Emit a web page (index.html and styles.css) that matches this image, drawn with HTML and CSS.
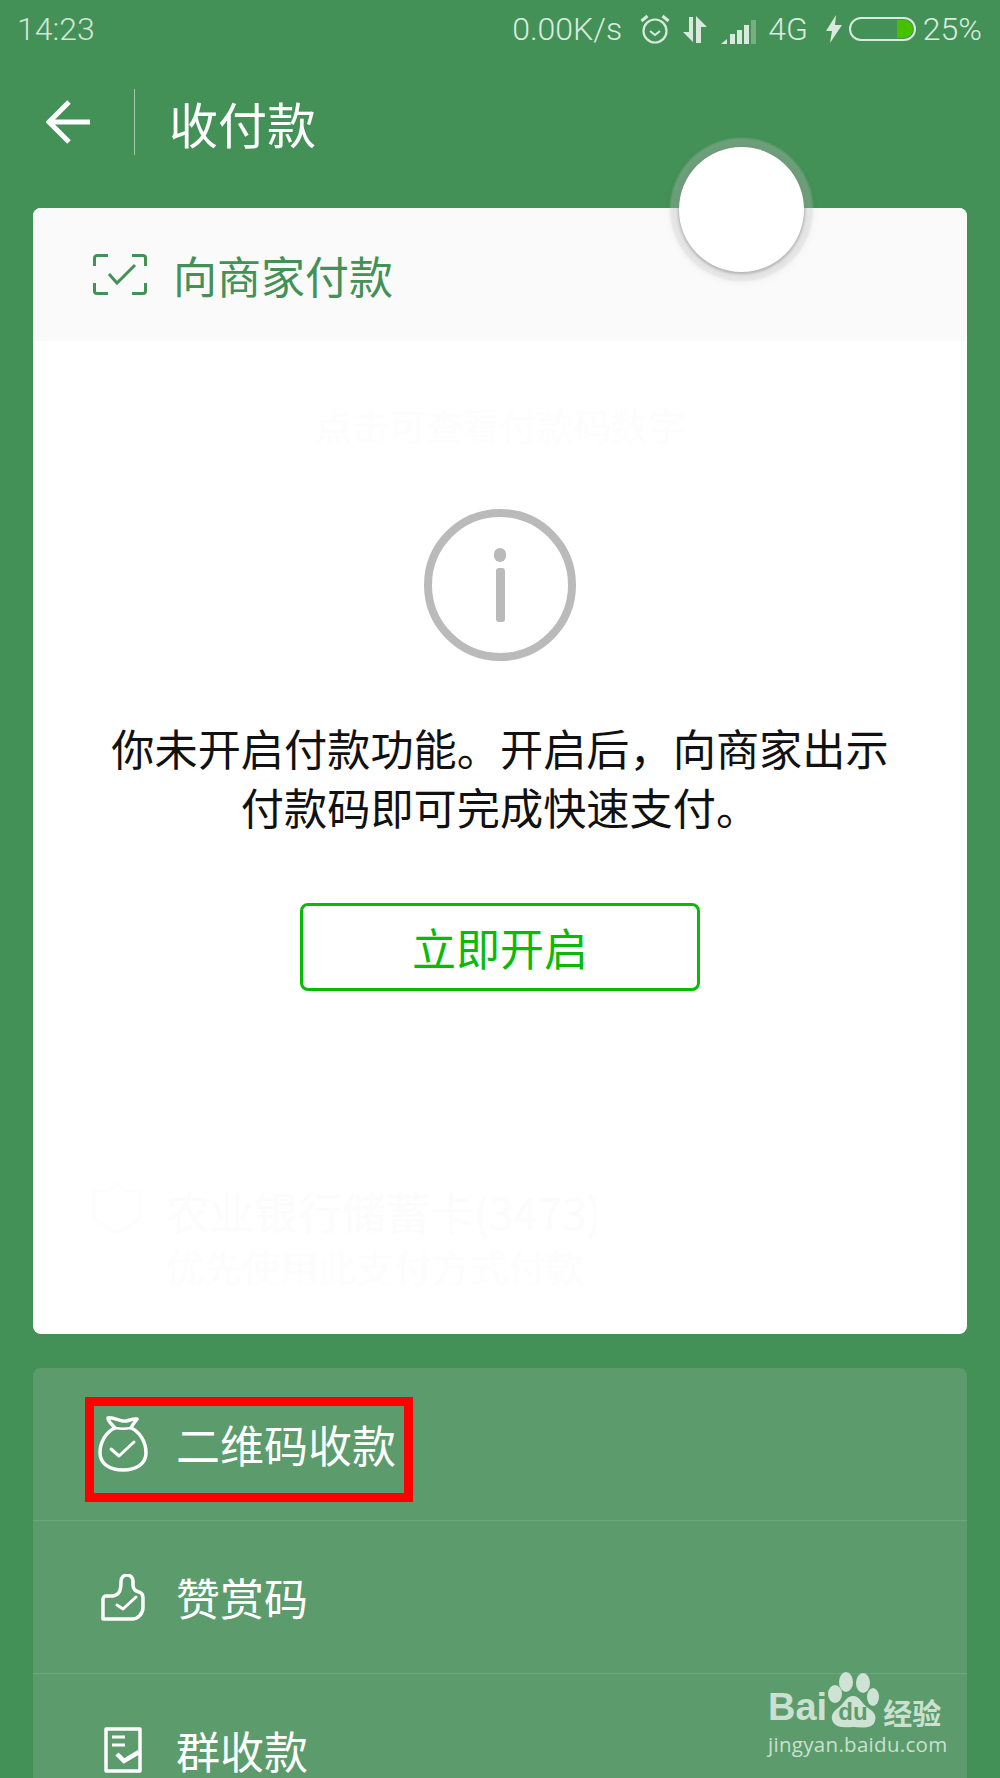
FILE: index.html
```html
<!DOCTYPE html>
<html>
<head>
    <title>收付款</title>
    <link rel="stylesheet" href="styles.css">
</head>
<body>
    <div class="page">
        <div class="status-bar">
            <span class="time">14:23</span>
            <div class="status-right">
                <span class="speed">0.00K/s</span>
                <svg class="st-alarm" width="30" height="30" viewBox="0 0 30 30" fill="none" stroke="#d9e9dd" stroke-width="2.2">
                    <circle cx="15" cy="17" r="11.5"/>
                    <path d="M10 17l5 4 5-4" stroke-width="2"/>
                    <path d="M1.500 7l6-5M28.500 7l-6-5" stroke-width="3"/>
                </svg>
                <svg class="st-arrows" width="26" height="27" viewBox="0 0 26 27" fill="#d9e9dd">
                    <path d="M7 1h4v25L1 16h6z"/>
                    <path d="M14 27V0l11 11h-6v16z"/>
                </svg>
                <svg class="st-signal" width="35" height="24" viewBox="0 0 35 24" fill="#d9e9dd">
                    <path d="M0 24l6-5v5z"/>
                    <rect x="9" y="14" width="5" height="10"/>
                    <rect x="16" y="10" width="5" height="14"/>
                    <rect x="23" y="5" width="5" height="19"/>
                    <rect x="30" y="0" width="5" height="24" opacity="0.35"/>
                </svg>
                <span class="net">4G</span>
                <svg class="st-bolt" width="16" height="28" viewBox="0 0 16 28" fill="#d9e9dd">
                    <path d="M10 0L0 16h6L4 28 16 10H9z"/>
                </svg>
                <div class="battery"><div class="battery-level"></div></div>
                <span class="percent">25%</span>
            </div>
        </div>

        <div class="top-bar">
            <svg class="back" width="44" height="44" viewBox="0 0 44 44" fill="none" stroke="#fff" stroke-width="5">
                <path d="M44 22H4M23 2L3 22l20 20"/>
            </svg>
            <div class="top-divider"></div>
            <div class="top-title">收付款</div>
        </div>

        <div class="card">
            <div class="card-head">
                <svg class="scan-icon" width="54" height="41" viewBox="0 0 54 41" fill="none" stroke="#439157" stroke-width="3">
                    <path d="M15 1.500H4a2.500 2.500 0 0 0-2.500 2.500V12M39 1.500h11a2.500 2.500 0 0 1 2.500 2.500V12M15 39.500H4a2.500 2.500 0 0 1-2.500-2.500V29M39 39.500h11a2.500 2.500 0 0 0 2.500-2.500V29"/>
                    <path d="M16 20l8 9 18-18"/>
                </svg>
                <span class="card-title">向商家付款</span>
            </div>
            <div class="card-body">
                <div class="hint-faint">点击可查看付款码数字</div>
                <div class="info-ring"><div class="info-dot"></div><div class="info-bar"></div></div>
                <div class="message">你未开启付款功能。开启后，向商家出示<br>付款码即可完成快速支付。</div>
                <div class="open-btn">立即开启</div>
                <div class="bank">
                    <svg class="bank-icon" width="50" height="53" viewBox="0 0 50 53" fill="none" stroke="#fdfdfd" stroke-width="3">
                        <path d="M2 10h14l9-8 9 8h14v28L25 52 2 38z"/>
                    </svg>
                    <div class="bank-text">
                        <div class="bank-name">农业银行储蓄卡(3473)</div>
                        <div class="bank-sub">优先使用此支付方式付款</div>
                    </div>
                </div>
            </div>
        </div>

        <div class="menu">
            <div class="menu-row">
                <div class="menu-icon">
                    <svg width="50" height="56" viewBox="0 0 50 56" fill="none" stroke="#fff" stroke-width="3.500" stroke-linejoin="round" stroke-linecap="round">
                        <path d="M17 12C8 16 2 26 2 37c0 11 10 17 23 17s23-6 23-17c0-11-6-21-15-25 1-3 4-6 6-9-5-1-9 3-14 2-5-1-11-4-15-3 0 4 5 7 7 10z"/>
                        <path d="M17 12c5 1 11 1 16 0" stroke-width="2.500"/>
                        <path d="M13 33l8 7 15-14" stroke-width="3"/>
                    </svg>
                </div>
                <span class="menu-label">二维码收款</span>
            </div>
            <div class="menu-row">
                <div class="menu-icon">
                    <svg class="thumb" width="44" height="47" viewBox="0 0 44 47" fill="none" stroke="#fff" stroke-width="3.500" stroke-linejoin="round" stroke-linecap="round">
                        <path d="M2 45V25a3 3 0 0 1 3-3h7c6-1 8-5 8-14V7a6 6 0 0 1 12 0v4c0 4 2 6 6 7 3 1 4 3 4 6v9c0 7-5 12-11 12z"/>
                        <path d="M16 31l6 4 13-12" stroke-width="3"/>
                    </svg>
                </div>
                <span class="menu-label">赞赏码</span>
            </div>
            <div class="menu-row">
                <div class="menu-icon">
                    <svg class="note" width="38" height="46" viewBox="0 0 38 46" fill="none" stroke="#fff" stroke-width="3.500">
                        <path d="M2 2h34v42H2z" stroke-linejoin="round"/>
                        <path d="M8 10h13M8 18h13" stroke-width="3"/>
                        <path d="M13 27l7 7 15-9" stroke-width="4.500"/>
                    </svg>
                </div>
                <span class="menu-label">群收款</span>
            </div>
        </div>

        <!-- overlays -->
        <div class="float-ball"></div>
        <div class="red-box"></div>
        <div class="watermark">
            <div class="wm-top">
                <span class="wm-bai">Bai</span>
                <svg class="wm-paw" width="53" height="56" viewBox="0 0 53 56">
                    <g fill="#cfe3d4">
                        <ellipse cx="8" cy="22" rx="7" ry="9"/>
                        <ellipse cx="19" cy="10" rx="7" ry="10"/>
                        <ellipse cx="36" cy="11" rx="7" ry="10"/>
                        <ellipse cx="46" cy="25" rx="6" ry="9"/>
                        <path d="M26 24c-7 0-9 8-15 12-5 4-8 8-5 14 3 5 10 6 20 5 12 1 20 1 22-6 2-6-2-10-7-13-6-4-8-12-15-12z"/>
                    </g>
                    <text class="wm-du" x="26" y="48" text-anchor="middle">du</text>
                </svg>
                <span class="wm-cn">经验</span>
            </div>
            <div class="wm-url">jingyan.baidu.com</div>
        </div>
    </div>
</body>
</html>
```

FILE: styles.css
```css
html, body {
    margin: 0;
    padding: 0;
    background: #439157;
}
body {
    font-family: "Noto Sans CJK SC", "Noto Sans", sans-serif;
}
.page {
    position: relative;
    height: 1778px;
    overflow: hidden;
    background: #439157;
}

/* status bar */
.status-bar {
    height: 58px;
    display: flex;
    align-items: center;
    justify-content: space-between;
    padding: 0 18px 0 17px;
    font-family: Roboto, sans-serif;
    font-size: 32px;
    font-weight: 300;
    color: #dcebe0;
}
.time {
    color: #d3e5d8;
}
.status-right {
    display: flex;
    align-items: center;
}
.st-alarm { margin-left: 18px; }
.st-arrows { margin-left: 12px; }
.st-signal { margin-left: 13px; margin-top: 6px; }
.net { margin-left: 12px; }
.st-bolt { margin-left: 18px; }
.battery {
    width: 67px;
    height: 24px;
    margin-left: 7px;
    box-sizing: border-box;
    border: 2px solid #d9e9dd;
    border-radius: 12px;
    padding: 1px;
    display: flex;
    justify-content: flex-end;
}
.battery-level {
    width: 16px;
    background: #47c000;
    border-radius: 0 9px 9px 0;
}
.percent { margin-left: 7px; }

/* title bar */
.top-bar {
    height: 128px;
    display: flex;
    align-items: center;
    padding-left: 46px;
}
.top-divider {
    width: 1px;
    height: 66px;
    margin-left: 44px;
    background: rgba(255, 255, 255, 0.5);
}
.top-title {
    margin-left: 34px;
    font-size: 49px;
    color: #fff;
}

/* main card */
.card {
    margin: 22px 33px 0 33px;
    height: 1126px;
    background: #fff;
    border-radius: 8px;
    overflow: hidden;
}
.card-head {
    height: 133px;
    display: flex;
    align-items: center;
    padding-left: 60px;
    background: #fafafa;
}
.card-title {
    margin-left: 26px;
    font-size: 44px;
    color: #439157;
}
.card-body {
    display: flex;
    flex-direction: column;
    align-items: center;
    padding-top: 62px;
}
.hint-faint {
    font-size: 37px;
    line-height: 44px;
    color: #fdfdfd;
}
.info-ring {
    width: 152px;
    height: 152px;
    margin-top: 62px;
    box-sizing: border-box;
    border: 8px solid #bababa;
    border-radius: 50%;
    display: flex;
    flex-direction: column;
    align-items: center;
}
.info-dot {
    width: 12px;
    height: 14px;
    margin-top: 31px;
    background: #bababa;
    border-radius: 6px;
}
.info-bar {
    width: 9px;
    height: 54px;
    margin-top: 6px;
    background: #bababa;
    border-radius: 3px;
}
.message {
    margin-top: 57px;
    font-size: 43.200px;
    line-height: 59px;
    color: #111;
    text-align: center;
}
.open-btn {
    width: 400px;
    height: 88px;
    margin-top: 67px;
    box-sizing: border-box;
    border: 3px solid #09bb07;
    border-radius: 8px;
    display: flex;
    align-items: center;
    justify-content: center;
    font-size: 44px;
    color: #09bb07;
}
.bank {
    align-self: flex-start;
    display: flex;
    margin-top: 190px;
    padding-left: 59px;
}
.bank-text {
    margin-left: 24px;
    margin-top: 8px;
}
.bank-name {
    font-size: 44px;
    line-height: 44px;
    color: #fcfcfc;
}
.bank-sub {
    margin-top: 11px;
    font-size: 38px;
    line-height: 44px;
    color: #fdfdfd;
}

/* lower menu */
.menu {
    margin: 34px 33px 0 33px;
    background: #5b9b6c;
    border-radius: 8px 8px 0 0;
}
.menu-row {
    height: 153px;
    box-sizing: border-box;
    display: flex;
    align-items: center;
    border-bottom: 1px solid rgba(255, 255, 255, 0.12);
    padding-left: 65px;
}
.menu-icon {
    width: 78px;
    display: flex;
}
.thumb { margin-left: 3px; }
.note { margin-left: 6px; }
.menu-label {
    font-size: 44px;
    line-height: 48px;
    color: #fff;
}

/* things on top */
.float-ball {
    position: absolute;
    left: 679px;
    top: 147px;
    width: 125px;
    height: 125px;
    background: #fff;
    border-radius: 50%;
    box-shadow: 0 1px 3px 1px rgba(130, 130, 130, 0.5), 0 0 2px 9px rgba(200, 200, 200, 0.32), 0 2px 7px 10px rgba(0, 0, 0, 0.03);
}
.red-box {
    position: absolute;
    left: 85px;
    top: 1397px;
    width: 328px;
    height: 105px;
    box-sizing: border-box;
    border: 9px solid #f00;
}
.watermark {
    position: absolute;
    left: 768px;
    top: 1672px;
    color: #cbe0d1;
}
.wm-top {
    display: flex;
    align-items: flex-end;
    height: 56px;
}
.wm-bai {
    font-family: "Liberation Sans", sans-serif;
    font-size: 38px;
    font-weight: bold;
    line-height: 38px;
    margin-bottom: 2px;
}
.wm-du {
    font-family: "Liberation Sans", sans-serif;
    font-size: 24px;
    font-weight: bold;
    fill: #5b9b6c;
}
.wm-cn {
    font-size: 29px;
    font-weight: bold;
    line-height: 32px;
    margin-left: 3px;
}
.wm-url {
    margin-top: 3px;
    font-family: "Open Sans", sans-serif;
    font-size: 20.500px;
    line-height: 26px;
    letter-spacing: 0.3px;
}
```
